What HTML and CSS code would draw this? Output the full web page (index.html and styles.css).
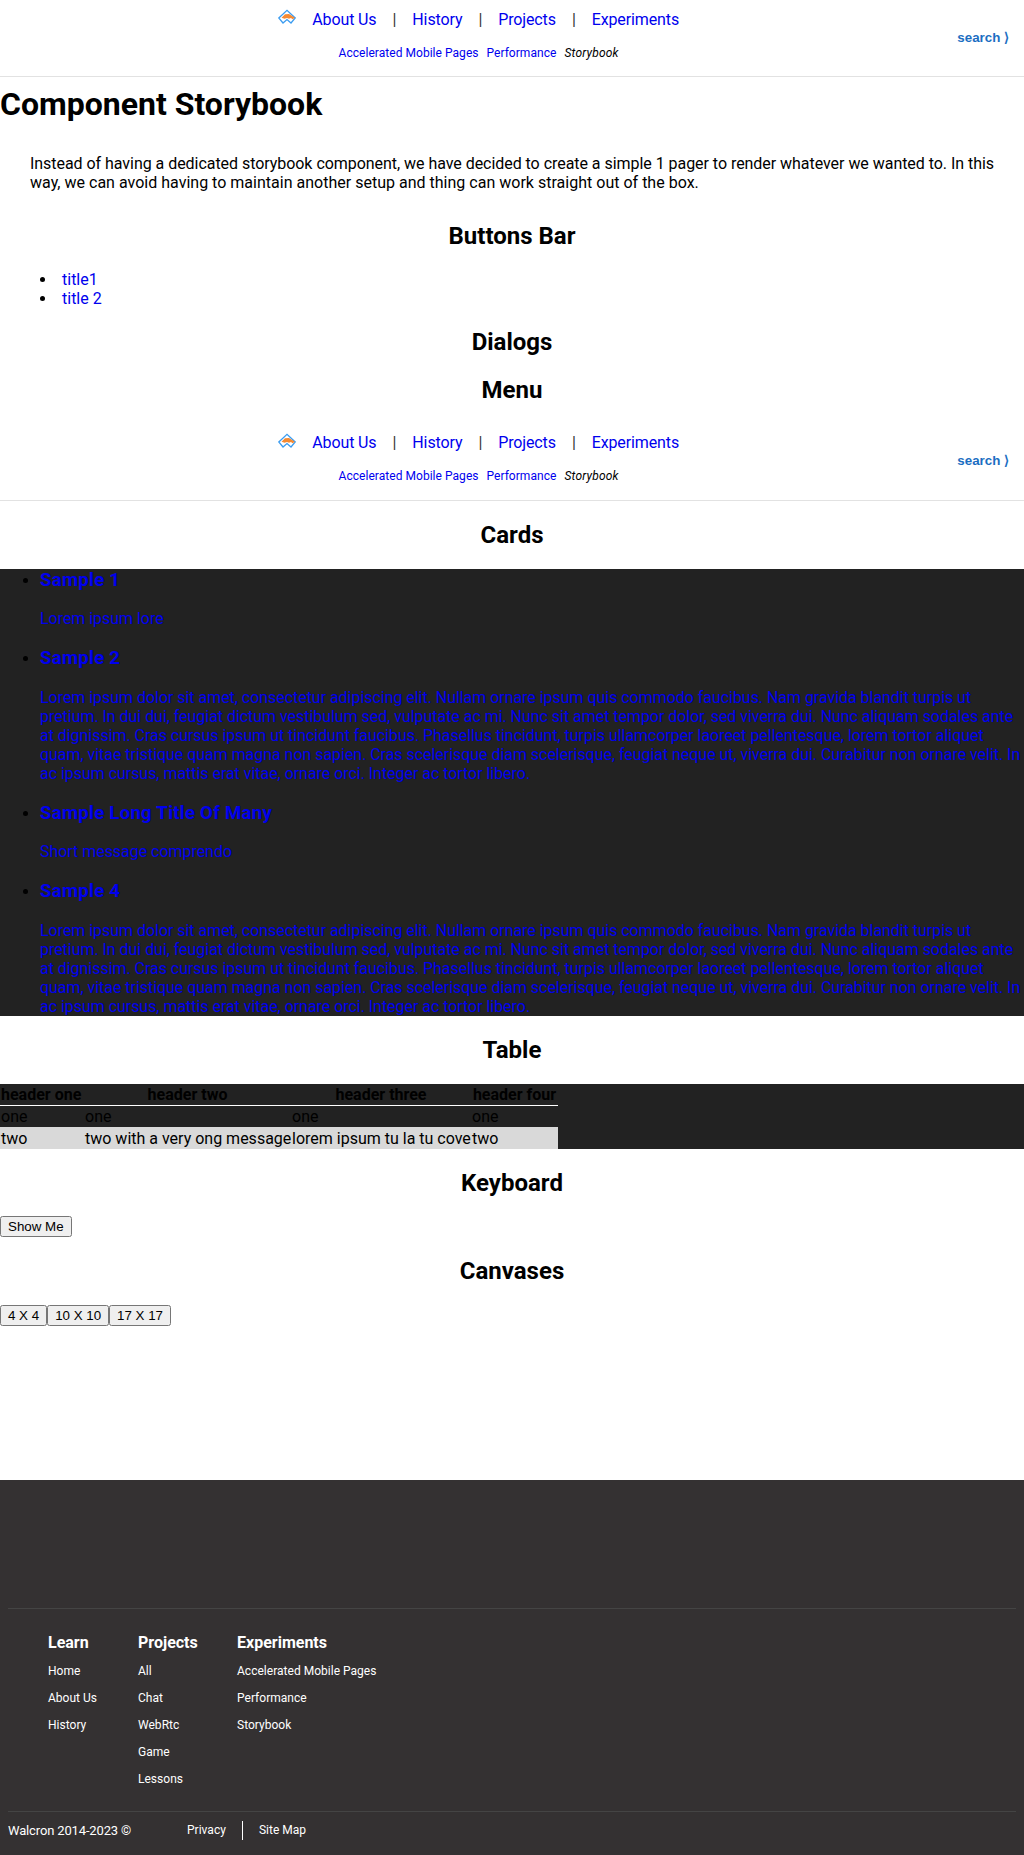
FILE: index.html
```html
<!DOCTYPE html>
<html lang="en">
<head>
<meta charset="utf-8">
<title>Component Storybook</title>
<link rel="stylesheet" href="styles.css">
</head>
<body>
<svg class="defs" width="0" height="0">
  <symbol id="logo" viewBox="0 0 18 16">
    <path d="M.8 9 9 1.300 17.200 9 13 14 9 10.500 5 14z" fill="none" stroke="#3b9cf0" stroke-width="1.300"/>
    <path d="M3.500 8.800 7 5.300l4-.3 6 3.800-2.500 1.500L13 9l-2 .8L9 9l-2.500.7z" fill="#f58a33"/>
  </symbol>
</svg>
<header class="menu">
  <nav class="menu-nav">
    <div class="menu-main">
      <a href="#"><svg class="logo"><use href="#logo"/></svg></a>
      <a href="#">About Us</a><span>|</span><a href="#">History</a><span>|</span><a href="#">Projects</a><span>|</span><a href="#">Experiments</a>
    </div>
    <div class="menu-sub"><a href="#">Accelerated Mobile Pages</a><a href="#">Performance</a><em>Storybook</em></div>
  </nav>
  <button class="search">search ⟩</button>
</header>
<main>
  <h1>Component Storybook</h1>
  <p class="intro">Instead of having a dedicated storybook component, we have decided to create a simple 1 pager to render whatever we wanted to. In this <span>way, we can avoid having to maintain another setup and thing can work straight out of the box.</span></p>
  <h2>Buttons Bar</h2>
  <ul class="button-bar">
    <li><a href="#">title1</a></li>
    <li><a href="#">title 2</a></li>
  </ul>
  <h2>Dialogs</h2>
  <h2>Menu</h2>
  <div class="menu">
    <nav class="menu-nav">
      <div class="menu-main">
        <a href="#"><svg class="logo"><use href="#logo"/></svg></a>
        <a href="#">About Us</a><span>|</span><a href="#">History</a><span>|</span><a href="#">Projects</a><span>|</span><a href="#">Experiments</a>
      </div>
      <div class="menu-sub"><a href="#">Accelerated Mobile Pages</a><a href="#">Performance</a><em>Storybook</em></div>
    </nav>
    <button class="search">search ⟩</button>
  </div>
  <h2>Cards</h2>
  <ul class="cards">
    <li><a href="#"><h3>Sample 1</h3><p>Lorem ipsum lore</p></a></li>
    <li><a href="#"><h3>Sample 2</h3><p>Lorem ipsum dolor sit amet, consectetur adipiscing elit. Nullam ornare ipsum quis commodo faucibus. Nam gravida blandit turpis ut pretium. In dui dui, feugiat dictum vestibulum sed, vulputate ac mi. Nunc sit amet tempor dolor, sed viverra dui. Nunc aliquam sodales ante at dignissim. Cras cursus ipsum ut tincidunt faucibus. Phasellus tincidunt, turpis ullamcorper laoreet pellentesque, lorem tortor aliquet quam, vitae tristique quam magna non sapien. Cras scelerisque diam scelerisque, feugiat neque ut, viverra dui. Curabitur non ornare velit. In ac ipsum cursus, mattis erat vitae, ornare orci. Integer ac tortor libero.</p></a></li>
    <li><a href="#"><h3>Sample Long Title Of Many</h3><p>Short message comprendo</p></a></li>
    <li><a href="#"><h3>Sample 4</h3><p>Lorem ipsum dolor sit amet, consectetur adipiscing elit. Nullam ornare ipsum quis commodo faucibus. Nam gravida blandit turpis ut pretium. In dui dui, feugiat dictum vestibulum sed, vulputate ac mi. Nunc sit amet tempor dolor, sed viverra dui. Nunc aliquam sodales ante at dignissim. Cras cursus ipsum ut tincidunt faucibus. Phasellus tincidunt, turpis ullamcorper laoreet pellentesque, lorem tortor aliquet quam, vitae tristique quam magna non sapien. Cras scelerisque diam scelerisque, feugiat neque ut, viverra dui. Curabitur non ornare velit. In ac ipsum cursus, mattis erat vitae, ornare orci. Integer ac tortor libero.</p></a></li>
  </ul>
  <h2>Table</h2>
  <div class="table-wrap">
    <table>
      <colgroup><col class="col-one"><col class="col-two"><col class="col-three"><col class="col-four"></colgroup>
      <thead><tr><th>header one</th><th>header two</th><th>header three</th><th>header four</th></tr></thead>
      <tbody>
        <tr><td>one</td><td>one</td><td>one</td><td>one</td></tr>
        <tr><td>two</td><td>two with a very ong message</td><td>lorem ipsum tu la tu cove</td><td>two</td></tr>
      </tbody>
    </table>
  </div>
  <h2>Keyboard</h2>
  <div class="actions"><button>Show Me</button></div>
  <h2>Canvases</h2>
  <div class="actions canvases"><button>4 X 4</button><button>10 X 10</button><button>17 X 17</button></div>
</main>
<footer>
  <div class="links">
    <section><h4>Learn</h4><a href="#">Home</a><a href="#">About Us</a><a href="#">History</a></section>
    <section><h4>Projects</h4><a href="#">All</a><a href="#">Chat</a><a href="#">WebRtc</a><a href="#">Game</a><a href="#">Lessons</a></section>
    <section><h4>Experiments</h4><a href="#">Accelerated Mobile Pages</a><a href="#">Performance</a><a href="#">Storybook</a></section>
  </div>
  <div class="legal"><span class="copyright">Walcron 2014-2023 ©</span><a href="#">Privacy</a><a href="#">Site Map</a></div>
</footer>
</body>
</html>
```
FILE: styles.css
```css
body {
  margin: 0;
  font-family: Roboto, sans-serif;
  font-size: 16px;
  line-height: 19px;
  color: #000;
}
a { color: #0000ee; text-decoration: none; }
.defs { display: block; }
.menu {
  display: flex;
  align-items: center;
  height: 76px;
  border-bottom: 1px solid #e2e2e2;
}
.menu-nav { flex: 1; }
.menu-main {
  display: flex;
  justify-content: center;
  align-items: center;
  gap: 16px;
  height: 19px;
  letter-spacing: -0.12px;
}
.menu-main span { color: #333; }
.logo { display: block; width: 18px; height: 16px; margin-top: -4px; }
.menu-sub {
  display: flex;
  justify-content: center;
  gap: 8px;
  margin: 17px 0 7px;
  font-size: 12px;
  line-height: 14px;
  letter-spacing: 0.04px;
}
.menu-sub em { letter-spacing: 0.2px; }
.search {
  padding: 0 15px 2px 0;
  border: 0;
  background: none;
  font: bold 13.333px "Liberation Sans", Arial, sans-serif;
  color: #1b6ec2;
}
h1 { margin: 8px 0 31.3px; font-size: 32px; line-height: 38px; }
h2 { margin: 19.92px 0; font-size: 24px; line-height: 28px; text-align: center; }
h3 { margin: 18.72px 0; font-size: 18.72px; line-height: 22px; letter-spacing: 0.2px; }
.intro { margin: 0 30px 30px; text-align: justify; letter-spacing: -0.05px; }
.intro span { letter-spacing: 0.01px; }
.button-bar { margin: 0; padding-left: 40px; list-style: inside; }
.cards { margin: 0; padding-left: 40px; background: #222; }
.cards a, .cards p { display: block; margin: 0; }
.cards p { letter-spacing: -0.04px; }
.cards li:first-child h3 { margin-top: 0; }
.table-wrap { padding-bottom: 0.1px; background: #222; }
table { width: 558px; table-layout: fixed; border-collapse: collapse; white-space: nowrap; }
.col-one { width: 84px; }
.col-two { width: 207px; }
.col-three { width: 180px; }
.col-four { width: 87px; }
th, td { padding: 1px; }
th:first-child { padding-right: 3px; }
thead tr { border-bottom: 1px solid #fff; }
tbody tr:nth-child(even) { background: #d9d9d9; border-top: 1px solid #d9d9d9; }
.actions { display: flex; height: 21px; }
.actions button {
  font: 13.333px "Liberation Sans", Arial, sans-serif;
}
.canvases { height: 174.7px; align-items: flex-start; }
footer {
  box-sizing: border-box;
  height: 375px;
  padding: 128px 8px 0;
  background: #343132;
  color: #fff;
}
footer a { color: #fff; font-size: 12px; letter-spacing: 0.02px; }
.links {
  display: flex;
  gap: 40px;
  box-sizing: border-box;
  height: 203px;
  padding: 24px 40px 0;
  border-top: 1px solid #444;
}
.links section { display: flex; flex-direction: column; min-width: 50px; }
.links section:nth-child(2) { width: 59px; }
.links h4 { margin: 0 0 6px; }
.links a { line-height: 27px; }
.legal {
  display: flex;
  align-items: center;
  padding-top: 9px;
  border-top: 1px solid #444;
  font-size: 13px;
}
.copyright { width: 163px; letter-spacing: -0.15px; }
.legal a { padding: 0 16px; }
.legal a + a { border-left: 1px solid #fff; }
```
